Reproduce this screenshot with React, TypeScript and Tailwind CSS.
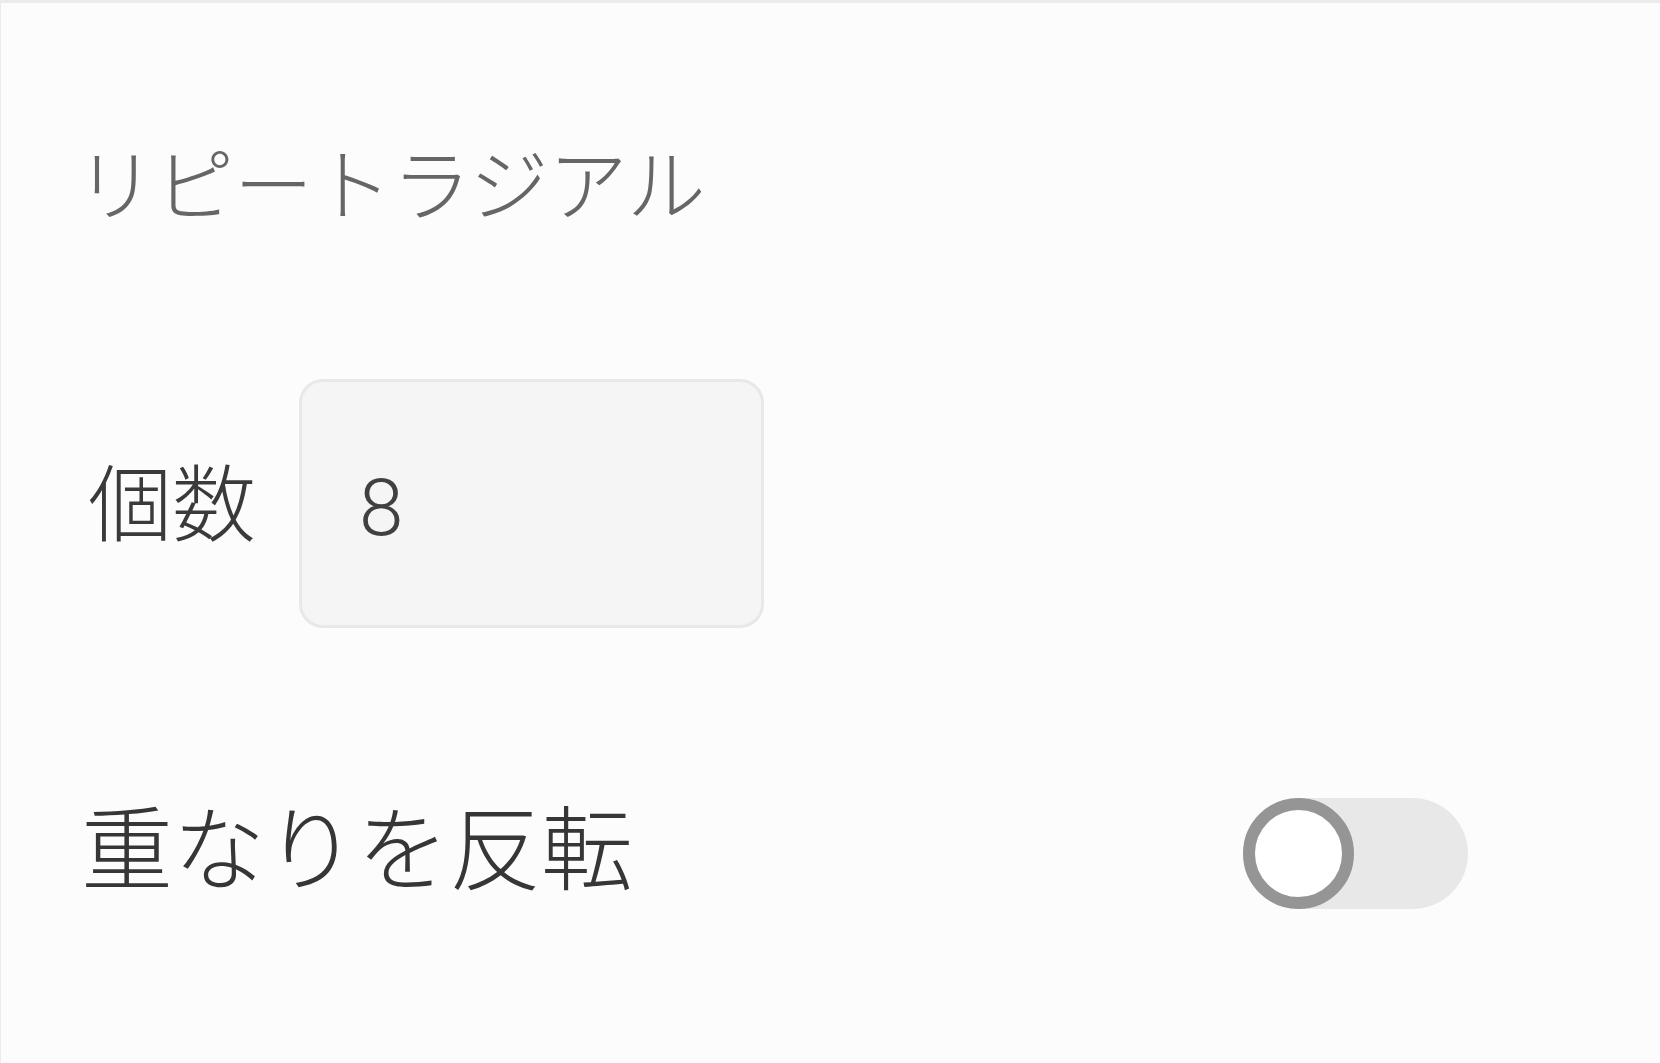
const cjk = { fontFamily: '"Noto Sans CJK JP", "Noto Sans", sans-serif' };

export default function App() {
  return (
    <div className="w-full h-[1063px] bg-[#fcfcfc] border-t-[3px] border-l border-[#ebebeb] pl-[87px] pt-[138px]" style={cjk}>
      {/* section title */}
      <h2 className="text-[79px] leading-none text-[#666666] font-light -ml-[12px]">リピートラジアル</h2>

      {/* count */}
      <div className="flex items-center gap-[43px] mt-[159px]">
        <span className="text-[84px] leading-none text-[#3a3a3a] font-light -mt-[10px]">個数</span>
        <input
          type="text"
          defaultValue="8"
          className="w-[465px] h-[249px] rounded-[24px] border-[3px] border-[#e8e8e8] bg-[#f5f5f5] pl-[57px] pt-[8px] text-[80px] text-[#404040] font-light outline-none"
          style={{ fontFamily: 'Roboto, "Noto Sans", sans-serif' }}
        />
      </div>

      {/* invert overlap */}
      <div className="flex items-center justify-between w-[1380px] mt-[170px]">
        <span className="text-[92px] leading-none text-[#363636] font-light -ml-[7px] -mt-[22px]">重なりを反転</span>
        <button className="relative w-[225px] h-[111px] rounded-full bg-[#e8e8e8]" aria-label="toggle">
          <span className="absolute left-0 top-0 w-[111px] h-[111px] rounded-full border-[12px] border-[#959595] bg-white" />
        </button>
      </div>
    </div>
  );
}
